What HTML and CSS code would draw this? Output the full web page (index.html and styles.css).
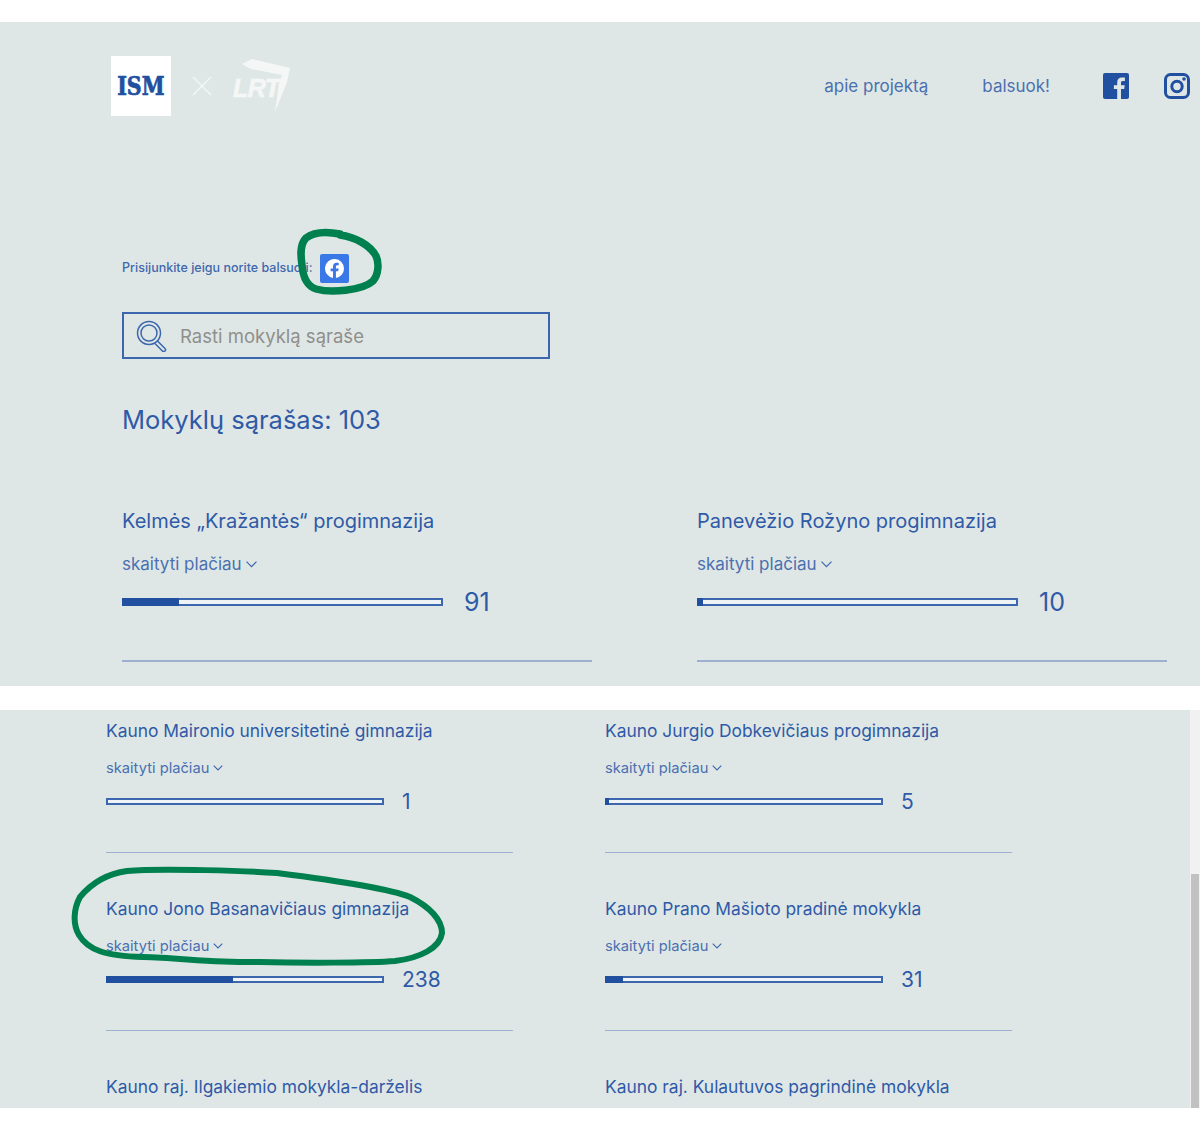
FILE: index.html
```html
<!DOCTYPE html>
<html lang="lt">
<head>
    <meta charset="UTF-8">
    <meta name="viewport" content="width=device-width, initial-scale=1.0">
    <title>Mokyklų sąrašas</title>
    <link rel="stylesheet" href="styles.css">
</head>
<body>
    <section class="panel panel-top">
        <header class="header">
            <div class="logos">
                <div class="logo-ism"><span>ISM</span></div>
                <svg class="logo-x" width="20" height="20" viewBox="0 0 20 20"><path d="M1 1l18 18M19 1L1 19" stroke="#f4f7f6" stroke-width="1.2" fill="none"/></svg>
                <div class="logo-lrt">
                    <span class="logo-lrt-text">LRT</span>
                    <svg class="logo-lrt-swoosh" width="58" height="56" viewBox="0 0 58 56"><path d="M9 6L19 1L57 10L54 24L42 54L46 26L49 17L18 11z" fill="#f4f7f6"/></svg>
                </div>
            </div>
            <nav class="nav">
                <a href="#">apie projektą</a>
                <a href="#">balsuok!</a>
                <svg class="nav-icon nav-icon-fb" width="26" height="26" viewBox="0 0 26 26"><rect width="26" height="26" rx="2" fill="#2250a0"/><path d="M18 26v-10h3.2l.5-3.8H18v-2.400c0-1.100.3-1.800 1.900-1.800h2V4.600c-.4 0-1.500-.2-2.900-.2-2.900 0-4.800 1.800-4.800 5v2.800h-3.300V16h3.300v10z" fill="#dfe7e6"/></svg>
                <svg class="nav-icon" width="26" height="26" viewBox="0 0 26 26"><rect x="1.500" y="1.500" width="23" height="23" rx="5" fill="none" stroke="#2250a0" stroke-width="3"/><circle cx="13" cy="13.500" r="5.200" fill="none" stroke="#2250a0" stroke-width="3"/><circle cx="20" cy="6" r="1.800" fill="#2250a0"/></svg>
            </nav>
        </header>

        <div class="login">
            <span class="login-text">Prisijunkite jeigu norite balsuoti:</span>
            <span class="login-fb">
                <svg width="19" height="19" viewBox="0 0 24 24"><path d="M24 12a12 12 0 1 0-13.900 11.900v-8.400H7.100V12h3V9.400c0-3 1.800-4.700 4.500-4.700 1.300 0 2.700.2 2.700.2v3h-1.500c-1.500 0-2 .9-2 1.900V12h3.400l-.5 3.500h-2.900v8.400A12 12 0 0 0 24 12z" fill="#fff"/></svg>
            </span>
        </div>

        <div class="search">
            <svg width="32" height="32" viewBox="0 0 32 32"><circle cx="13" cy="13" r="11.500" fill="none" stroke="#3c66ad" stroke-width="1.500"/><circle cx="13" cy="13" r="8" fill="none" stroke="#3c66ad" stroke-width="1.500"/><path d="M21.500 21l7.500 7.500a1.800 1.800 0 0 1-2.600 2.500l-7.400-7.500" fill="none" stroke="#3c66ad" stroke-width="1.500"/></svg>
            <span class="search-text">Rasti mokyklą sąraše</span>
        </div>

        <h1 class="list-title">Mokyklų sąrašas: 103</h1>

        <div class="cards">
            <article class="card">
                <h2 class="card-title">Kelmės „Kražantės“ progimnazija</h2>
                <a class="card-more" href="#">skaityti plačiau <svg width="11" height="7" viewBox="0 0 11 7"><path d="M.5.700l5 5 5-5" fill="none" stroke="#3c66ad" stroke-width="1.200"/></svg></a>
                <div class="card-votes">
                    <div class="bar"><div class="bar-fill" style="width: 18%"></div></div>
                    <span class="card-count">91</span>
                </div>
            </article>
            <article class="card">
                <h2 class="card-title">Panevėžio Rožyno progimnazija</h2>
                <a class="card-more" href="#">skaityti plačiau <svg width="11" height="7" viewBox="0 0 11 7"><path d="M.5.700l5 5 5-5" fill="none" stroke="#3c66ad" stroke-width="1.200"/></svg></a>
                <div class="card-votes">
                    <div class="bar"><div class="bar-fill" style="width: 2%"></div></div>
                    <span class="card-count">10</span>
                </div>
            </article>
        </div>
    </section>

    <section class="panel panel-bottom">
        <div class="cards">
            <article class="card">
                <h2 class="card-title">Kauno Maironio universitetinė gimnazija</h2>
                <a class="card-more" href="#">skaityti plačiau <svg width="10" height="6" viewBox="0 0 11 7"><path d="M.5.700l5 5 5-5" fill="none" stroke="#3c66ad" stroke-width="1.300"/></svg></a>
                <div class="card-votes">
                    <div class="bar"><div class="bar-fill" style="width: 0"></div></div>
                    <span class="card-count">1</span>
                </div>
            </article>
            <article class="card">
                <h2 class="card-title">Kauno Jurgio Dobkevičiaus progimnazija</h2>
                <a class="card-more" href="#">skaityti plačiau <svg width="10" height="6" viewBox="0 0 11 7"><path d="M.5.700l5 5 5-5" fill="none" stroke="#3c66ad" stroke-width="1.300"/></svg></a>
                <div class="card-votes">
                    <div class="bar"><div class="bar-fill" style="width: 1.500%"></div></div>
                    <span class="card-count">5</span>
                </div>
            </article>
            <article class="card">
                <h2 class="card-title">Kauno Jono Basanavičiaus gimnazija</h2>
                <a class="card-more" href="#">skaityti plačiau <svg width="10" height="6" viewBox="0 0 11 7"><path d="M.5.700l5 5 5-5" fill="none" stroke="#3c66ad" stroke-width="1.300"/></svg></a>
                <div class="card-votes">
                    <div class="bar"><div class="bar-fill" style="width: 46.500%"></div></div>
                    <span class="card-count">238</span>
                </div>
            </article>
            <article class="card">
                <h2 class="card-title">Kauno Prano Mašioto pradinė mokykla</h2>
                <a class="card-more" href="#">skaityti plačiau <svg width="10" height="6" viewBox="0 0 11 7"><path d="M.5.700l5 5 5-5" fill="none" stroke="#3c66ad" stroke-width="1.300"/></svg></a>
                <div class="card-votes">
                    <div class="bar"><div class="bar-fill" style="width: 6.500%"></div></div>
                    <span class="card-count">31</span>
                </div>
            </article>
            <article class="card">
                <h2 class="card-title">Kauno raj. Ilgakiemio mokykla-darželis</h2>
            </article>
            <article class="card">
                <h2 class="card-title">Kauno raj. Kulautuvos pagrindinė mokykla</h2>
            </article>
        </div>
        <div class="scrollbar"><div class="scrollbar-thumb"></div></div>
    </section>

    <!-- pen marks drawn over the screenshot -->
    <svg class="marks" width="1200" height="1127" viewBox="0 0 1200 1127">
        <path class="mark-small" d="M340 234C330 232 315 231 306 238C299 245 301 258 302 265C303 278 307 286 316 289C330 293 362 291 373 281C379 274 379 262 376 256C370 245 355 237 340 235" />
        <path d="M277 873C250 871 160 868 127 871C105 874 90 885 80 897C73 910 73 925 79 935C88 950 105 956 143 957C180 958 220 963 260 962C300 963 370 963 395 961C420 958 440 948 442 933C442 920 430 907 410 897C390 889 340 881 277 873" />
    </svg>
</body>
</html>
```

FILE: styles.css
```css
*, ::before, ::after {
    box-sizing: border-box;
}
body {
    font-family: 'Inter', 'Liberation Sans', sans-serif;
    margin: 0;
    padding-top: 22px;
    height: 1127px;
    overflow: hidden;
    background-color: #fff;
    color: #2f5aa6;
}
h1, h2 {
    margin: 0;
    font-weight: 400;
}
a {
    color: inherit;
    text-decoration: none;
}
.panel {
    background-color: #dfe7e6;
}
.panel-top {
    height: 664px;
    padding: 34px 10px 0 122px;
    margin-bottom: 24px;
}
.panel-bottom {
    height: 398px;
    display: flex;
    overflow: hidden;
}

/* header */
.header {
    display: flex;
    justify-content: space-between;
    align-items: center;
    height: 60px;
    margin-left: -11px;
    margin-bottom: 137px;
}
.logos {
    display: flex;
    align-items: center;
}
.logo-ism {
    width: 60px;
    height: 60px;
    background-color: #fff;
    color: #2250a0;
    font-family: 'DejaVu Serif Condensed', 'DejaVu Serif', serif;
    font-weight: 700;
    font-size: 26px;
    line-height: 60px;
    text-align: center;
    -webkit-text-stroke: .7px #2250a0;
}
.logo-ism span {
    display: inline-block;
    transform: scaleX(.88);
}
.logo-x {
    margin: 0 21px;
}
.logo-lrt {
    position: relative;
    width: 58px;
    height: 56px;
}
.logo-lrt-text {
    position: absolute;
    left: 0;
    top: 16px;
    color: #f4f7f6;
    font-family: 'Liberation Sans', sans-serif;
    font-weight: 700;
    font-style: italic;
    font-size: 25px;
    letter-spacing: -.5px;
    -webkit-text-stroke: .6px #f4f7f6;
}
.logo-lrt-swoosh {
    position: absolute;
    left: 0;
    top: 0;
}
.nav {
    display: flex;
    align-items: center;
    font-size: 17px;
    color: #4a70b0;
}
.nav a {
    margin-right: 54px;
}
.nav a:nth-child(2) {
    margin-right: 53px;
}
.nav-icon-fb {
    margin-right: 35px;
}

/* login and search */
.login {
    display: flex;
    align-items: center;
    gap: 7px;
    height: 30px;
    font-size: 12.500px;
    font-weight: 500;
    color: #3f68ad;
    margin-bottom: 29px;
}
.login-text {
    padding-bottom: 2px;
}
.login-fb {
    width: 29px;
    height: 29px;
    border-radius: 2px;
    background-color: #3b78e7;
    display: flex;
    align-items: center;
    justify-content: center;
}
.search {
    width: 428px;
    height: 47px;
    border: 2px solid #3c66ad;
    display: flex;
    align-items: center;
    gap: 12px;
    padding-left: 12px;
    margin-bottom: 44px;
}
.search-text {
    font-size: 18.500px;
    color: #8f8f8b;
}
.list-title {
    font-size: 25.500px;
    line-height: 34px;
    color: #2f5aa6;
    margin-bottom: 70px;
}

/* school cards */
.cards {
    display: grid;
    grid-template-columns: 470px 470px;
    column-gap: 105px;
}
.card-title {
    font-size: 20px;
    line-height: 28px;
    margin-bottom: 15px;
}
.card-more {
    display: block;
    font-size: 17px;
    line-height: 28px;
    color: #4a70b0;
    margin-bottom: 9px;
}
.card-more svg {
    vertical-align: 2px;
}
.card-votes {
    display: flex;
    align-items: center;
    height: 30px;
    gap: 21px;
    padding-bottom: 43px;
    box-sizing: content-box;
    border-bottom: 2px solid #9db0cf;
}
.bar {
    width: 321px;
    height: 8px;
    border: 2px solid #3c66ad;
    background-color: #eef3f5;
}
.bar-fill {
    margin: -2px 0 0 -2px;
    height: 8px;
    background-color: #2250a0;
}
.card-count {
    font-size: 25px;
    color: #2f5aa6;
}

/* lower screenshot is a smaller zoom of the same list */
.panel-bottom .cards {
    flex: 1;
    grid-template-columns: 407px 407px;
    grid-auto-rows: 178px;
    column-gap: 92px;
    padding: 8px 0 0 106px;
}
.panel-bottom .card-title {
    font-size: 17.400px;
    line-height: 26px;
    margin-bottom: 11px;
}
.panel-bottom .card-more {
    font-size: 14.700px;
    line-height: 26px;
    margin-bottom: 5px;
}
.panel-bottom .card-votes {
    height: 30px;
    gap: 18px;
    padding-bottom: 36px;
    border-bottom-width: 1px;
}
.panel-bottom .bar {
    width: 278px;
    height: 7px;
}
.panel-bottom .bar-fill {
    height: 7px;
}
.panel-bottom .card-count {
    font-size: 21px;
}
.scrollbar {
    width: 10px;
    padding: 0 1px;
    background-color: #f1f1f1;
    display: flex;
    align-items: flex-end;
}
.scrollbar-thumb {
    width: 100%;
    height: 234px;
    background-color: #c1c1c1;
}

.marks {
    position: absolute;
    left: 0;
    top: 0;
    fill: none;
    stroke: #00804f;
    stroke-width: 6;
    stroke-linecap: round;
}
.mark-small {
    stroke-width: 7.500;
}
```
